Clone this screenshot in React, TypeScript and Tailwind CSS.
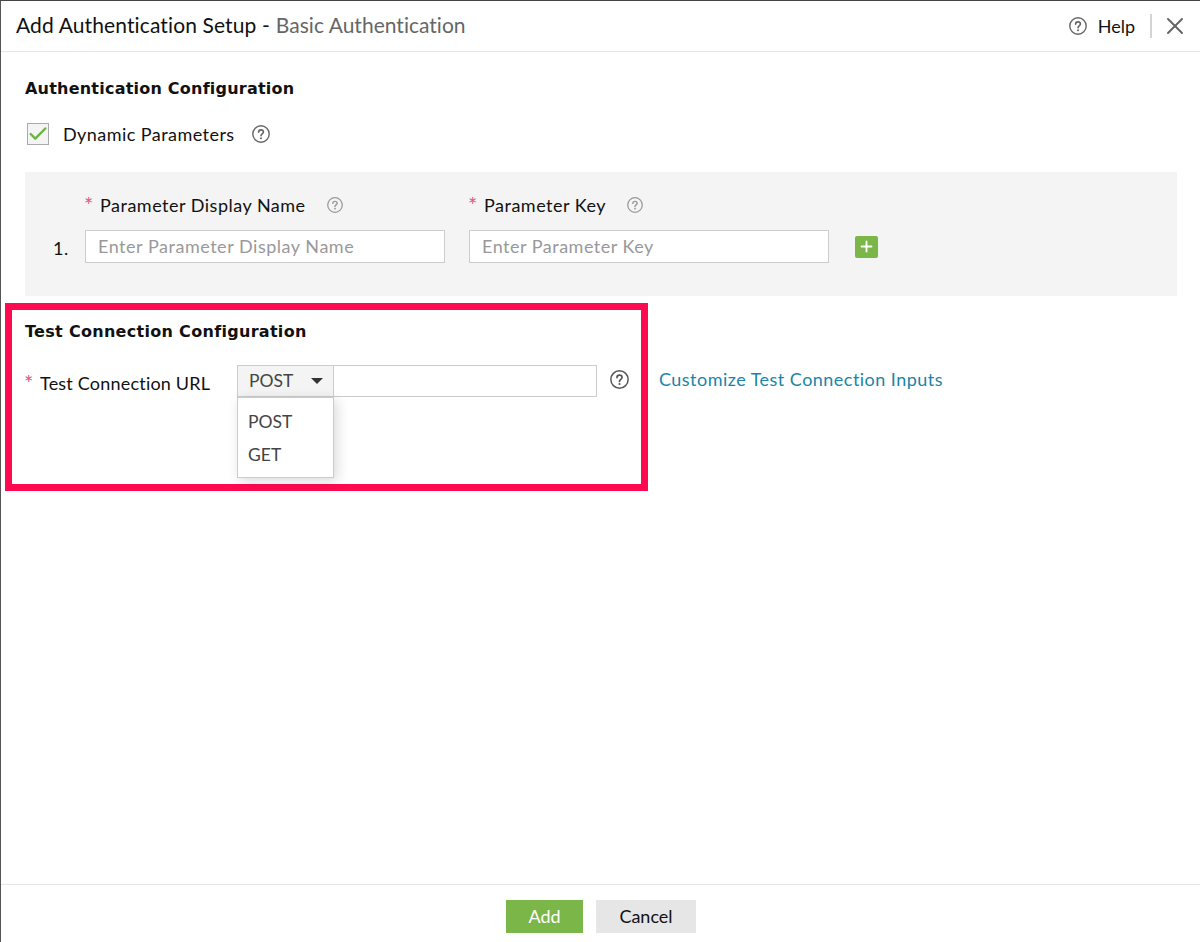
import { Check, Plus, X } from "lucide-react";

const FONT = "font-['Lato','Noto_Sans',sans-serif]";

function HelpIcon({ size = 18, color = "#666" }: { size?: number; color?: string }) {
  return (
    <svg width={size} height={size} viewBox="0 0 18 18" fill="none" className="shrink-0">
      <circle cx="9" cy="9" r="8.2" stroke={color} strokeWidth="1.4" />
      <path
        d="M6.6 7.2c0-1.4 1-2.3 2.4-2.3s2.4.9 2.4 2.1c0 1.9-2.4 1.9-2.4 3.8"
        stroke={color}
        strokeWidth="1.6"
        strokeLinecap="round"
      />
      <circle cx="9" cy="13.2" r="1" fill={color} />
    </svg>
  );
}

function Req() {
  return <span className="text-[#e0558a] ml-[-1px] mr-[6px] text-[22px] leading-[22px] w-[10px]">*</span>;
}

export default function App() {
  return (
    <div className={`${FONT} relative w-[1200px] h-[942px] bg-white text-[#111] flex flex-col border-t border-l border-t-[#444] border-l-[#555] overflow-hidden`}>
      {/* header */}
      <div className="h-[51px] shrink-0 flex items-center border-b border-[#e6e6e6] pl-[15px] pr-[11px]">
        <span className="text-[21px] tracking-[0.12px] text-[#111] mb-[2px]">Add Authentication Setup -</span>
        <span className="text-[21px] tracking-[0.02px] text-[#666] ml-[6px] mb-[2px]">Basic Authentication</span>
        <div className="ml-auto flex items-center">
          <HelpIcon />
          <span className="text-[18px] ml-[11px]">Help</span>
          <div className="w-[2px] h-[24px] bg-[#d4d4d4] ml-[15px] mr-[9px]" />
          <X size={28} strokeWidth={1.7} className="text-[#666]" />
        </div>
      </div>

      <div className="flex-1 relative">
        {/* auth config */}
        <div className="pl-[24px] pr-[23px]">
          <h2 className="font-['DejaVu_Sans',sans-serif] text-[16px] tracking-[0.22px] font-bold mt-[26px] leading-[22px]">Authentication Configuration</h2>
          <div className="flex items-center mt-[22px] h-[24px]">
            <div className="w-[22px] h-[22px] ml-[2px] bg-[#f4f4f4] border border-[#aaa] flex items-center justify-center">
              <Check size={22} strokeWidth={2.6} className="text-[#6db33f] shrink-0" />
            </div>
            <span className="text-[18px] ml-[14px] tracking-[0.45px]">Dynamic Parameters</span>
            <span className="ml-[17px]">
              <HelpIcon />
            </span>
          </div>

          <div className="mt-[26px] h-[124px] bg-[#f4f4f4] pl-[28px] pt-[22px]">
            <div className="flex pl-[32px] h-[22px] items-center">
              <div className="w-[384px] flex items-center">
                <Req />
                <span className="text-[18px] tracking-[0.5px]">Parameter Display Name</span>
                <span className="ml-[21px]">
                  <HelpIcon size={16} color="#999" />
                </span>
              </div>
              <div className="flex items-center">
                <Req />
                <span className="text-[18px] tracking-[0.5px]">Parameter Key</span>
                <span className="ml-[21px]">
                  <HelpIcon size={16} color="#999" />
                </span>
              </div>
            </div>
            <div className="flex items-center mt-[14px]">
              <span className="w-[32px] text-[18px] tracking-[0.5px] pt-[3px]">1.</span>
              <input
                readOnly
                placeholder="Enter Parameter Display Name"
                className="w-[360px] h-[33px] bg-white border border-[#ccc] px-[12px] pb-[2px] text-[18px] tracking-[0.53px] placeholder:text-[#999] outline-none"
              />
              <input
                readOnly
                placeholder="Enter Parameter Key"
                className="ml-[24px] w-[360px] h-[33px] bg-white border border-[#ccc] px-[12px] pb-[2px] text-[18px] tracking-[0.5px] placeholder:text-[#999] outline-none"
              />
              <div className="ml-[26px] w-[23px] h-[22px] rounded-[2px] bg-[#7ab648] flex items-center justify-center">
                <Plus size={17} strokeWidth={2.6} className="text-white" />
              </div>
            </div>
          </div>
        </div>

        {/* test connection */}
        <div className="pl-[24px]">
          <h2 className="font-['DejaVu_Sans',sans-serif] text-[16px] tracking-[0.3px] font-bold mt-[25px] leading-[22px]">Test Connection Configuration</h2>
          <div className="flex items-start mt-[22px]">
            <div className="w-[212px] flex items-center h-[36px]">
              <span className="text-[#e0558a] ml-[-1px] mr-[6px] text-[22px] leading-[22px] w-[10px]">*</span>
              <span className="text-[18px] tracking-[0.2px]">Test Connection URL</span>
            </div>
            <div className="relative flex h-[32px] w-[360px] border border-[#ccc]">
              <div className="w-[96px] h-full shrink-0 bg-[#f4f4f4] border-r border-[#ccc] flex items-center pl-[11px] text-[#444] text-[17.5px]">
                POST
                <span className="ml-[18px] w-0 h-0 border-x-[6px] border-x-transparent border-t-[6px] border-t-[#333]" />
              </div>
              <div className="absolute left-[-1px] top-[31px] w-[97px] h-[81px] bg-white border border-[#ccc] shadow-[3px_3px_12px_rgba(0,0,0,0.15)] z-10 pt-[8px] text-[#444] text-[17.5px]">
                <div className="h-[33px] flex items-center pl-[10px]">POST</div>
                <div className="h-[33px] flex items-center pl-[10px]">GET</div>
              </div>
            </div>
            <span className="ml-[13px] mt-[5px]">
              <HelpIcon size={19} color="#555" />
            </span>
            <a className="ml-[30px] text-[18px] text-[#1b85a6] tracking-[0.47px] leading-[28px]">Customize Test Connection Inputs</a>
          </div>
        </div>

        {/* annotation */}
        <div className="absolute left-[4px] top-[251px] w-[643px] h-[188px] border-[7px] border-[#ff0a50] pointer-events-none" />
      </div>

      {/* footer */}
      <div className="h-[58px] shrink-0 border-t border-[#e6e6e6] flex justify-center items-start pt-[15px] pl-[1px]">
        <button className="w-[77px] h-[33px] bg-[#7ab648] text-white text-[18px]">Add</button>
        <button className="w-[100px] h-[33px] ml-[13px] bg-[#e6e6e6] text-[#111] text-[18px]">Cancel</button>
      </div>
    </div>
  );
}
